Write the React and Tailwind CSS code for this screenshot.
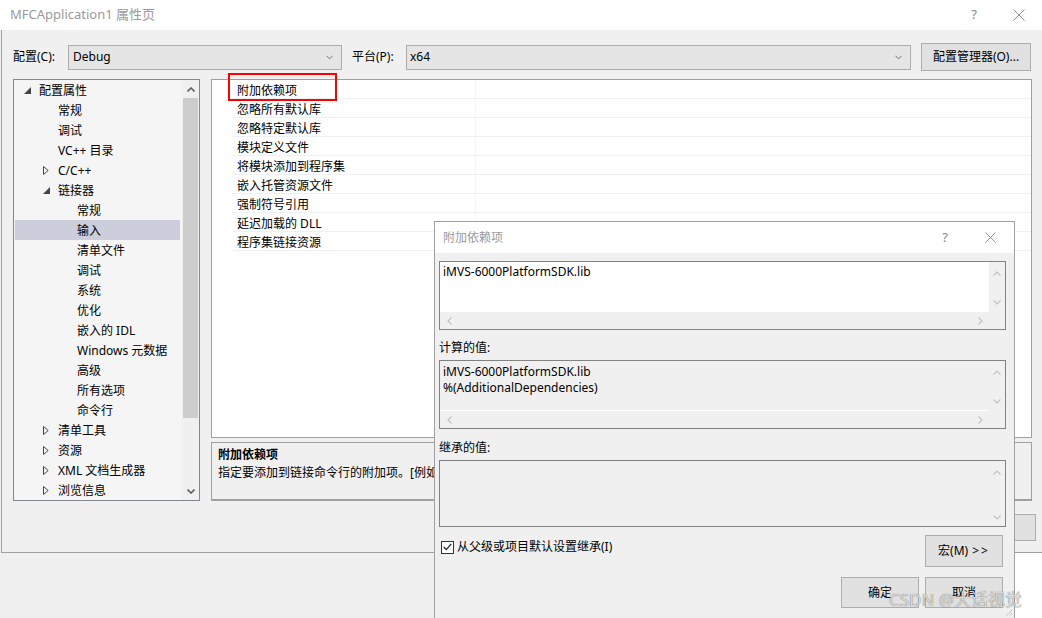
import React from "react";

const tree = [
  { t: "配置属性", lvl: 0, arrow: "open" },
  { t: "常规", lvl: 1 },
  { t: "调试", lvl: 1 },
  { t: "VC++ 目录", lvl: 1 },
  { t: "C/C++", lvl: 1, arrow: "closed" },
  { t: "链接器", lvl: 1, arrow: "open" },
  { t: "常规", lvl: 2 },
  { t: "输入", lvl: 2, selected: true },
  { t: "清单文件", lvl: 2 },
  { t: "调试", lvl: 2 },
  { t: "系统", lvl: 2 },
  { t: "优化", lvl: 2 },
  { t: "嵌入的 IDL", lvl: 2 },
  { t: "Windows 元数据", lvl: 2 },
  { t: "高级", lvl: 2 },
  { t: "所有选项", lvl: 2 },
  { t: "命令行", lvl: 2 },
  { t: "清单工具", lvl: 1, arrow: "closed" },
  { t: "资源", lvl: 1, arrow: "closed" },
  { t: "XML 文档生成器", lvl: 1, arrow: "closed" },
  { t: "浏览信息", lvl: 1, arrow: "closed" },
];

const props = [
  "附加依赖项",
  "忽略所有默认库",
  "忽略特定默认库",
  "模块定义文件",
  "将模块添加到程序集",
  "嵌入托管资源文件",
  "强制符号引用",
  "延迟加载的 DLL",
  "程序集链接资源",
];

// small chevron used by scrollbars and combo boxes
const Chev = ({ dir = "down", color = "#606060", w = 8, sw = 1.2 }) => {
  const pts = {
    up: "0.5,4.5 4,1 7.5,4.5",
    down: "0.5,0.5 4,4 7.5,0.5",
    left: "4.5,0.5 1,4 4.5,7.5",
    right: "0.5,0.5 4,4 0.5,7.5",
  }[dir];
  const vert = dir === "up" || dir === "down";
  return (
    <svg width={vert ? w : 5} height={vert ? 5 : w} viewBox={vert ? "0 0 8 5" : "0 0 5 8"}>
      <polyline points={pts} fill="none" stroke={color} strokeWidth={sw} />
    </svg>
  );
};

const Close = ({ size = 12, color = "#777" }) => (
  <svg width={size} height={size} viewBox="0 0 12 12">
    <path d="M0.5 0.5 L11.5 11.5 M11.5 0.5 L0.5 11.5" stroke={color} strokeWidth="1" />
  </svg>
);

const TreeArrow = ({ kind }) => {
  if (kind === "open")
    return (
      <svg width="7" height="7" viewBox="0 0 7 7">
        <polygon points="7,0 7,7 0,7" fill="#444" />
      </svg>
    );
  if (kind === "closed")
    return (
      <svg width="6" height="9" viewBox="0 0 6 9">
        <polygon points="0.5,0.5 5.2,4.5 0.5,8.5" fill="none" stroke="#444" strokeWidth="1" />
      </svg>
    );
  return null;
};

const EditBox = ({ lines, white, hscroll, h }) => (
  <div className={`w-[567px] border border-[#828282] flex flex-col ${white ? "bg-white" : "bg-[#f0f0f0]"}`} style={{ height: h }}>
    <div className="flex flex-1">
      <div className={`flex-1 pl-[3px] ${white ? "pt-[2px]" : "pt-[3px] border-b border-white"} leading-[16px]`}>
        {lines.map((l, i) => (
          <div key={i}>{l}</div>
        ))}
      </div>
      <div className="w-[16px] bg-[#f0f0f0] flex flex-col items-center justify-between pt-[9px] pb-[7px]">
        <Chev dir="up" color="#c2c2c2" />
        <Chev dir="down" color="#c2c2c2" />
      </div>
    </div>
    {hscroll && (
      <div className="h-[17px] bg-[#f0f0f0] flex items-center pl-[7px] pr-[22px] justify-between">
        <Chev dir="left" color="#c2c2c2" />
        <Chev dir="right" color="#c2c2c2" />
      </div>
    )}
  </div>
);

const Btn = ({ children, w = 78, h = 31 }) => (
  <div
    className="bg-[#e1e1e1] border border-[#adadad] flex items-center justify-center"
    style={{ width: w, height: h }}
  >
    {children}
  </div>
);

export default function App() {
  return (
    <div className="relative w-[1042px] h-[618px] overflow-hidden bg-[#f0f0f0] text-[12px] text-black font-['Noto_Sans','Noto_Sans_CJK_SC',sans-serif]">
      {/* main property window */}
      <div className="absolute left-0 top-0 w-[1042px] h-[553px] flex flex-col">
        <div className="h-[30px] bg-white flex items-center pl-[10px] text-[13px] text-[#9a9a9a]">
          <span>MFCApplication1 属性页</span>
          <span className="ml-auto text-[13px] text-[#888]">?</span>
          <span className="ml-[36px] mr-[17px]">
            <Close size={12} color="#888" />
          </span>
        </div>
        <div className="flex-1 ml-px border-l border-b border-[#a0a0a0] bg-[#f0f0f0] flex flex-col pl-[11px] pt-[13px]">
          {/* config row */}
          <div className="h-[28px] flex items-center">
            <span className="w-[55px]">配置(C):</span>
            <div className="w-[274px] h-[25px] bg-[#e5e5e5] border border-[#acacac] flex items-center pl-[4px] pr-[8px]">
              <span>Debug</span>
              <span className="ml-auto">
                <Chev dir="down" color="#606060" w={7} sw={1} />
              </span>
            </div>
            <span className="ml-[10px] w-[54px]">平台(P):</span>
            <div className="w-[505px] h-[25px] bg-[#e5e5e5] border border-[#acacac] flex items-center pl-[3px] pr-[8px]">
              <span>x64</span>
              <span className="ml-auto">
                <Chev dir="down" color="#606060" w={7} sw={1} />
              </span>
            </div>
            <div className="ml-[10px] w-[110px] h-[28px] bg-[#e1e1e1] border border-[#adadad] flex items-center justify-center">
              配置管理器(O)...
            </div>
          </div>

          {/* content */}
          <div className="flex mt-[8px]">
            {/* tree */}
            <div className="w-[187px] h-[422px] border border-[#828790] bg-[#f5f5f5] flex overflow-hidden">
              <div className="flex-1 flex flex-col">
                {tree.map((n, i) => (
                  <div
                    key={i}
                    className={`h-[20px] shrink-0 flex items-center ${n.selected ? "bg-[#cccedb] ml-px mr-[2px]" : ""}`}
                    style={{ paddingLeft: (n.selected ? 9 : 10) + n.lvl * 19 }}
                  >
                    <span className="w-[15px] flex items-center">
                      <TreeArrow kind={n.arrow} />
                    </span>
                    <span className="leading-[20px] pt-[2px] whitespace-nowrap">{n.t}</span>
                  </div>
                ))}
              </div>
              <div className="w-[17px] bg-[#f0f0f0] flex flex-col items-center">
                <div className="h-[18px] flex items-center justify-center">
                  <Chev dir="up" color="#606060" sw={1.6} />
                </div>
                <div className="w-[15px] h-[320px] bg-[#cdcdcd]" />
                <div className="mt-auto h-[18px] flex items-center justify-center">
                  <Chev dir="down" color="#606060" sw={1.6} />
                </div>
              </div>
            </div>

            {/* right column */}
            <div className="ml-[11px] w-[821px] flex flex-col">
              <div className="relative h-[359px] border border-[#a0a0a0] bg-white pl-[21px]">
                {props.map((p, i) => (
                  <div key={i} className="h-[19px] flex border-b border-[#eef0f5]">
                    <div className="w-[242px] pl-[4px] pt-[2px] leading-[18px] whitespace-nowrap">{p}</div>
                    <div className="flex-1 border-l border-[#f4f5f8]" />
                  </div>
                ))}
                <div className="absolute left-[16px] top-[-7px] w-[109px] h-[28px] border-2 border-[#ff0000]" />
              </div>
              <div className="mt-[4px] h-[59px] border border-b-2 border-[#a0a0a0] bg-[#f0f0f0] px-[6px] pt-[3px] leading-[18px] overflow-hidden">
                <div className="font-bold">附加依赖项</div>
                <div className="whitespace-nowrap">指定要添加到链接命令行的附加项。[例如 kernel32.lib]</div>
              </div>
            </div>
          </div>

          {/* bottom button of the main window, mostly covered by the dialog */}
          <div className="mt-[13px] flex justify-end pr-[6px]">
            <Btn w={75} h={27} />
          </div>
        </div>
      </div>

      {/* white area behind bottom right */}
      <div className="absolute left-[1015px] top-[553px] w-[27px] h-[65px] bg-white" />

      {/* additional dependencies dialog */}
      <div className="absolute left-[434px] top-[221px] w-[581px] h-[398px] border border-[#a0a0a0] bg-[#f0f0f0] flex flex-col">
        <div className="h-[31px] bg-white flex items-center pl-[8px] text-[#9a9a9a]">
          <span>附加依赖项</span>
          <span className="ml-auto text-[13px] text-[#888]">?</span>
          <span className="ml-[37px] mr-[18px]">
            <Close size={11} color="#888" />
          </span>
        </div>
        <div className="flex-1 flex flex-col pl-[4px] pr-[8px]">
          <div className="mt-[8px]">
            <EditBox lines={["iMVS-6000PlatformSDK.lib"]} white hscroll h={69} />
          </div>
          <div className="mt-[10px] mb-[4px] leading-[16px]">计算的值:</div>
          <EditBox lines={["iMVS-6000PlatformSDK.lib", "%(AdditionalDependencies)"]} hscroll h={69} />
          <div className="mt-[11px] mb-[4px] leading-[16px]">继承的值:</div>
          <div className="w-[567px] h-[67px] border border-[#828282] bg-[#f0f0f0] flex">
            <div className="flex-1" />
            <div className="w-[16px] flex flex-col items-center justify-between pt-[9px] pb-[6px]">
              <Chev dir="up" color="#c2c2c2" />
              <Chev dir="down" color="#c2c2c2" />
            </div>
          </div>
          <div className="mt-[8px] flex items-start pr-[3px]">
            <div className="mt-[5px] ml-[2px] flex items-center">
              <div className="w-[13px] h-[13px] bg-white border border-[#333] flex items-center justify-center">
                <svg width="9" height="8" viewBox="0 0 9 8">
                  <polyline points="0.8,4 3.3,6.6 8.2,0.8" fill="none" stroke="#222" strokeWidth="1.3" />
                </svg>
              </div>
              <span className="ml-[3px] leading-[14px]">从父级或项目默认设置继承(I)</span>
            </div>
            <div className="ml-auto">
              <Btn w={78} h={32}>
                宏(M) <span className="ml-[4px] tracking-[2px]">&gt;&gt;</span>
              </Btn>
            </div>
          </div>
          <div className="mt-[10px] flex justify-end gap-[6px] pr-[3px]">
            <Btn>确定</Btn>
            <Btn>取消</Btn>
          </div>
        </div>
        <svg className="absolute right-[1px] bottom-[1px]" width="10" height="10" viewBox="0 0 10 10">
          <path d="M9 3 L3 9 M9 6 L6 9" stroke="#a0a0a0" strokeWidth="1" strokeDasharray="1 1" />
        </svg>
      </div>

      {/* watermark */}
      <div className="absolute left-[889px] top-[588px] text-[17px] leading-[24px] text-[#dadada] [text-shadow:0_0_1px_rgba(0,0,0,0.6)] whitespace-nowrap">
        CSDN @大话视觉
      </div>
    </div>
  );
}
